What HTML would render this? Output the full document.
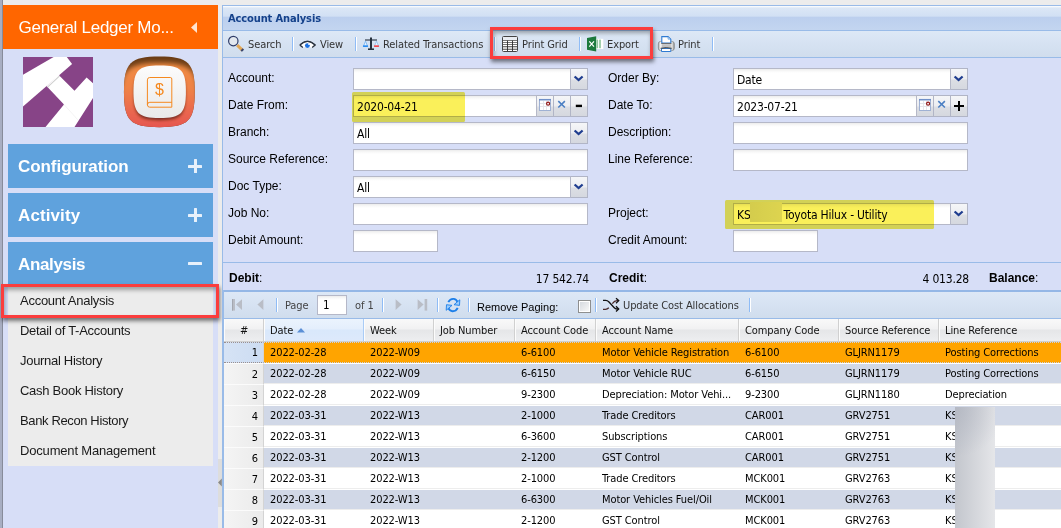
<!DOCTYPE html>
<html>
<head>
<meta charset="utf-8">
<title>Account Analysis</title>
<style>
html,body{margin:0;padding:0;}
body{width:1061px;height:528px;overflow:hidden;position:relative;background:#ececec;font-family:"Liberation Sans",sans-serif;font-size:12px;color:#000;}
.abs,.abs>*{position:absolute;}
svg{display:block;overflow:visible;}
#leftedge{left:0;top:0;width:3px;height:528px;background:linear-gradient(90deg,#a8aec2 0,#a8aec2 2px,#666973 3px);}
#side{left:3px;top:5px;width:215px;height:523px;background:#d7def7;}
#ohead{left:0;top:0;width:215px;height:44px;background:#ff6600;color:#fff;}
#ohead .t{left:15.500px;top:12px;font-size:17px;line-height:22px;white-space:nowrap;letter-spacing:-0.27px;}
.sec{left:5px;width:205px;height:44px;background:#5fa2dd;color:#fff;font-weight:bold;font-size:17px;}
.sec .t{left:10px;top:12px;line-height:22px;white-space:nowrap;}
.plus{left:180px;top:15px;width:14px;height:14px;}
.plus i{background:#e8f1fb;display:block;border-radius:.5px;}
#menu{left:5px;top:279px;width:205px;height:182px;background:#ececec;}
.mi{left:12px;font-size:13px;line-height:16px;white-space:nowrap;color:#1a1a1a;}
.redbox{border:3px solid #fb3d3d;box-shadow:1px 3px 4px rgba(0,0,0,.5),inset 1px 3px 4px rgba(0,0,0,.33);box-sizing:border-box;}
#split{left:218px;top:459px;width:4px;height:48px;background:#dddddd;}
#panel{left:222px;top:5px;width:839px;height:523px;background:#d7def7;border-left:1px solid #99bbe8;box-sizing:border-box;}
#phead{left:0;top:0;width:838px;height:26px;box-sizing:border-box;border-top:1px solid #99bbe8;border-bottom:1px solid #99bbe8;background:linear-gradient(#ffffff 0,#eef4fb 1px,#dbe7f6 2px,#d2e0f4 10px,#bccfee 11.500px,#c3d5f0 24px);}
#phead .t{left:5px;top:6px;font-weight:bold;font-size:11px;line-height:14px;color:#15428b;font-family:"DejaVu Sans Condensed","Liberation Sans",sans-serif;letter-spacing:-0.12px;white-space:nowrap;}
.bar{left:0;width:838px;box-sizing:border-box;border-bottom:1px solid #99bbe8;background:linear-gradient(#dde8f6 0,#d6e2f2 50%,#d0dded 100%);}
.tb{font-size:11px;line-height:14px;white-space:nowrap;color:#333;font-family:"DejaVu Sans Condensed","Liberation Sans",sans-serif;letter-spacing:-0.1px;}
.sep{width:1px;height:14px;background:#8fbcf6;border-right:1px solid #fff;}
.lbl{font-size:12px;line-height:14px;white-space:nowrap;color:#000;}
.inp{height:22px;box-sizing:border-box;border:1px solid #b5b8c8;background:#fff linear-gradient(#ececec 0,#f8f8f8 2px,#fff 4px);font-size:12px;line-height:22px;padding-left:3px;white-space:nowrap;overflow:hidden;font-family:"DejaVu Sans Condensed","Liberation Sans",sans-serif;letter-spacing:-0.2px;color:#000;}
.trg{width:17px;height:22px;box-sizing:border-box;border:1px solid #b1b5c6;border-left:0;background:linear-gradient(#f5f6f8 0,#ecedf1 10px,#dcdee4 11px,#d5d8df 20px);}
.trg svg{left:0;top:0;}
.hl{background:#faf05a;border-radius:1.500px;mix-blend-mode:multiply;}
#sum{left:0;top:257px;width:838px;height:30px;box-sizing:border-box;border-top:1px solid #99bbe8;border-bottom:2px solid #94b7e6;}
#sum b,#sum span{top:8px;line-height:14px;white-space:nowrap;}
#sum b i{font-style:normal;font-weight:normal;position:static}
#sum span{font-family:"DejaVu Sans Condensed","Liberation Sans",sans-serif;letter-spacing:-0.2px;top:9px}
#ghead{left:0;top:314px;width:838px;height:23px;box-sizing:border-box;border-bottom:1px solid #d0d0d0;background:linear-gradient(#f9f9f9 0,#f1f1f2 10px,#e5e6e8 11px,#edeef0 22px);}
.hc{top:0;height:22px;box-sizing:border-box;border-right:1px solid #d0d0d0;border-left:1px solid #fcfcfc;font-size:11px;line-height:24px;padding-left:5px;white-space:nowrap;overflow:hidden;font-family:"DejaVu Sans Condensed","Liberation Sans",sans-serif;letter-spacing:-0.1px;color:#111;}
.row{left:0;width:838px;height:21px;box-sizing:border-box;border-bottom:1px solid #ededed;border-top:1px solid #fff;background:#fff;}
.row.alt{background:#d1d8e7;border-bottom-color:#ededed;border-top-color:#fff}
.row.sel{background:#ffa400;border-top:1px dotted #c9d2e4;border-bottom:1px dotted #c9d2e4;}
.row span{top:0;line-height:19px;font-size:11px;white-space:nowrap;font-family:"DejaVu Sans Condensed","Liberation Sans",sans-serif;letter-spacing:-0.1px;color:#000;}
.row .n{left:1px;top:-1px;width:40px;height:21px;line-height:21px;box-sizing:border-box;text-align:right;padding-right:5px;background:linear-gradient(90deg,#f4f4f4,#ebebeb);border-right:1px solid #d4d4d4;border-top:1px solid #fbfbfb;}
.row.sel .n{background:linear-gradient(90deg,#d6e3f5,#ccdcf2);border-top:1px dotted #9a8f8f;border-bottom:1px dotted #9a8f8f;line-height:19px}
#blur{left:732px;top:402px;width:40px;height:121px;background:radial-gradient(circle 50px at 0 0,rgba(170,175,188,.6) 0,rgba(170,175,188,0) 100%),linear-gradient(90deg,#c3c6cd,#d4d6db 50%,#e5e6e9);}
</style>
</head>
<body>
<div class="abs" id="leftedge"></div>

<div class="abs" id="side">
  <div class="abs" id="ohead"><div class="abs t">General Ledger Mo...</div>
    <svg class="abs" style="left:187px;top:15.500px" width="8" height="13" viewBox="0 0 8 13"><path d="M7 1 V12 L1 6.500 Z" fill="#ffe3d0"/></svg>
  </div>

  <svg class="abs" style="left:20px;top:52px" width="70" height="70" viewBox="0 0 70 70">
    <rect width="70" height="70" fill="#874487"/>
    <path d="M0 17.700 L30.600 0 L43.800 0 L49.100 6.900 L0 49.400 Z" fill="#fff"/>
    <path d="M36.200 18.500 L51.500 33.800 L63.600 20.500 L70 26.200 L70 41 L51.500 70 L22.500 70 L41 47.500 L23.500 29 L35.500 17.800 Z" fill="#fff"/>
    <path d="M24.600 30.200 L36.600 18.900" stroke="#cfcfcf" stroke-width="1.100"/>
    <path d="M41 47.500 L55 63" stroke="#e9e9e9" stroke-width="0.500"/>
  </svg>

  <svg class="abs" style="left:119px;top:49px" width="76" height="78" viewBox="0 0 76 78">
    <defs>
      <linearGradient id="g1" x1="0" y1="0" x2="0" y2="1"><stop offset="0" stop-color="#f18c42"/><stop offset="0.350" stop-color="#ef8246"/><stop offset="0.700" stop-color="#e96350"/><stop offset="1" stop-color="#e24d4e"/></linearGradient>
      <linearGradient id="g2" x1="0" y1="0" x2="0" y2="1"><stop offset="0" stop-color="#fcfcfc"/><stop offset="1" stop-color="#e9e9e9"/></linearGradient>
      <filter id="f1" x="-30%" y="-30%" width="160%" height="160%"><feGaussianBlur stdDeviation="1.700"/></filter>
      <filter id="f2" x="-30%" y="-30%" width="160%" height="160%"><feGaussianBlur stdDeviation="2.600"/></filter>
      <clipPath id="cp"><path d="M37.350 2.450 C66.378 2.450 72.750 8.822 72.750 37.850 C72.750 66.878 66.378 73.250 37.350 73.250 C8.322 73.250 1.950 66.878 1.950 37.850 C1.950 8.822 8.322 2.450 37.350 2.450 Z"/></clipPath>
    </defs>
    <g clip-path="url(#cp)">
      <rect x="0" y="0" width="76" height="78" fill="#6b3d16"/>
      <path d="M37.350 9.000 C69.330 9.000 76.350 15.660 76.350 46.000 C76.350 76.340 69.330 83.000 37.350 83.000 C5.370 83.000 -1.650 76.340 -1.650 46.000 C-1.650 15.660 5.370 9.000 37.350 9.000 Z" fill="url(#g1)" filter="url(#f2)"/>
    </g>
    <path d="M37.700 15.000 C58.692 15.000 63.300 19.608 63.300 40.600 C63.300 61.592 58.692 66.200 37.700 66.200 C16.708 66.200 12.100 61.592 12.100 40.600 C12.100 19.608 16.708 15.000 37.700 15.000 Z" fill="#4a1208" opacity="0.700" filter="url(#f1)"/>
    <path d="M37.700 11.600 C59.184 11.600 63.900 16.316 63.900 37.800 C63.900 59.284 59.184 64.000 37.700 64.000 C16.216 64.000 11.500 59.284 11.500 37.800 C11.500 16.316 16.216 11.600 37.700 11.600 Z" fill="url(#g2)"/>
    <g fill="none" stroke="#f5891f" stroke-width="1">
      <path d="M27.800 23.500 H48.300 Q49.800 23.500 49.800 25 V53.200 H27.800 Q25.400 53.200 25.400 50.800 V25.900 Q25.400 23.500 27.800 23.500 Z"/>
      <path d="M49.800 48.300 H27.800 Q25.400 48.300 25.400 50.800"/>
    </g>
    <text x="37.400" y="41.400" font-family="Liberation Sans, sans-serif" font-size="16" fill="#f5891f" text-anchor="middle">$</text>
  </svg>

  <div class="abs sec" style="top:139px"><div class="abs t" style="letter-spacing:-0.06px">Configuration</div><div class="abs plus"><i style="left:5.500px;top:0;width:3px;height:14px"></i><i style="left:0;top:5.5px;width:14px;height:3px"></i></div></div>
  <div class="abs sec" style="top:188px"><div class="abs t" style="letter-spacing:0.1px">Activity</div><div class="abs plus"><i style="left:5.500px;top:0;width:3px;height:14px"></i><i style="left:0;top:5.5px;width:14px;height:3px"></i></div></div>
  <div class="abs sec" style="top:237px"><div class="abs t" style="letter-spacing:-0.35px">Analysis</div><div class="abs plus"><i style="left:0;top:5px;width:14px;height:3px"></i></div></div>

  <div class="abs" id="menu"><div class="abs mi" style="top:9px;letter-spacing:-0.26px">Account Analysis</div><div class="abs mi" style="top:39px;letter-spacing:-0.29px">Detail of T-Accounts</div><div class="abs mi" style="top:69px;letter-spacing:-0.3px">Journal History</div><div class="abs mi" style="top:99px;letter-spacing:-0.27px">Cash Book History</div><div class="abs mi" style="top:129px;letter-spacing:-0.37px">Bank Recon History</div><div class="abs mi" style="top:159px;letter-spacing:-0.18px">Document Management</div></div>
</div>
<div class="abs redbox" style="left:1px;top:284px;width:218px;height:34px"></div>
<div class="abs" id="split"><svg style="left:0;top:19px" width="4" height="9"><path d="M3.800 0.500 V8.500 L0 4.500 Z" fill="#8a8a8a"/></svg></div>

<div class="abs" id="panel">
  <div class="abs" id="phead"><div class="abs t">Account Analysis</div></div>
  <div class="abs bar" id="tbar" style="top:26px;height:27px">
    <div class="abs" style="left:4px;top:4px"><svg width="18" height="18" viewBox="0 0 18 18"><path d="M10.200 10.200 L15.600 15.400" stroke="#e3a755" stroke-width="3" stroke-linecap="butt"/><path d="M14.600 14.400 L16 15.800" stroke="#39466f" stroke-width="3"/><circle cx="6.300" cy="6.100" r="4.700" fill="#e3e8ef" stroke="#2f3c68" stroke-width="1.200"/></svg></div>
    <div class="abs tb" style="left:25px;top:7px">Search</div>
    <div class="abs sep" style="left:69px;top:6px"></div>
    <div class="abs" style="left:75.800px;top:8.600px"><svg width="17" height="9.500" viewBox="0 0 18 10"><path d="M1 5.300 Q9 -2.600 17 5.300 L14 7.800 M1 5.300 L4 7.800" fill="#fff" stroke="#2b3440" stroke-width="1.300" stroke-linejoin="round"/><path d="M1.500 5.300 Q9 -2.200 16.500 5.300 L14 7.600 L4 7.600 Z" fill="#fff"/><path d="M1 5.300 Q9 -2.600 17 5.300 L14 7.800 M1 5.300 L4 7.800" fill="none" stroke="#2b3440" stroke-width="1.300"/><circle cx="8.900" cy="5.900" r="2.600" fill="#1b70e0"/><circle cx="10.600" cy="4.300" r="1" fill="#fff"/></svg></div>
    <div class="abs tb" style="left:97px;top:7px">View</div>
    <div class="abs sep" style="left:132px;top:6px"></div>
    <div class="abs" style="left:139px;top:6px"><svg width="18" height="14" viewBox="0 0 18 14"><path d="M9 0.500 V12" stroke="#26313f" stroke-width="2"/><path d="M3 3 H15" stroke="#26313f" stroke-width="1.100"/><path d="M6 12.200 H12" stroke="#26313f" stroke-width="1.600"/><path d="M3.500 4.200 L1.300 9.500 H5.700 Z" fill="#eaf3fd" stroke="#6fb0f2" stroke-width="0.800"/><path d="M14.500 4.200 L12.300 9.500 H16.700 Z" fill="#eaf3fd" stroke="#8fbdf0" stroke-width="0.800"/><rect x="1.100" y="8.300" width="4.800" height="1.700" fill="#2a8cf2"/><rect x="12.100" y="8.300" width="4.800" height="1.700" fill="#f0484f"/></svg></div>
    <div class="abs tb" style="left:160px;top:7px">Related Transactions</div>
    <div class="abs sep" style="left:271px;top:6px"></div>
    <div class="abs" style="left:279px;top:5px"><svg width="16" height="16" viewBox="0 0 16 16"><rect x="0.500" y="0.500" width="15" height="15" rx="1" fill="#fff" stroke="#444"/><rect x="1" y="1" width="14" height="3" fill="#e9edf3"/><rect x="1" y="10.500" width="14" height="2.500" fill="#cfcfcf"/><path d="M1 4.500 H15 M1 6.500 H15 M1 8.500 H15 M1 10.500 H15 M1 13.500 H15" stroke="#4a4a4a" stroke-width="0.750"/><path d="M5.500 4.500 V15 M10.500 4.500 V15" stroke="#2a2a2a" stroke-width="0.900"/></svg></div>
    <div class="abs tb" style="left:299px;top:7px">Print Grid</div>
    <div class="abs sep" style="left:356px;top:6px"></div>
    <div class="abs" style="left:364px;top:5px"><svg width="17" height="16" viewBox="0 0 17 16"><rect x="9" y="2.800" width="7.300" height="10.200" fill="#fff"/><rect x="9.600" y="3.600" width="1.500" height="8.600" fill="#8cc59b"/><rect x="12.200" y="3.600" width="1.600" height="8.600" fill="#8cc59b"/><path d="M0 1.900 L9.200 0.200 V15.600 L0 13.800 Z" fill="#1d7a3d"/><path d="M2.300 5.300 L7 10.600 M7 5.300 L2.300 10.600" stroke="#fff" stroke-width="1.200"/></svg></div>
    <div class="abs tb" style="left:384px;top:7px">Export</div>
    <div class="abs" style="left:435px;top:5px"><svg width="17" height="16" viewBox="0 0 17 16"><defs><linearGradient id="pg" x1="0" y1="0" x2="1" y2="0"><stop offset="0" stop-color="#9a9a9a"/><stop offset="0.120" stop-color="#f4f4f4"/><stop offset="0.300" stop-color="#e4e4e4"/><stop offset="0.800" stop-color="#e0e0e0"/><stop offset="0.920" stop-color="#cfcfcf"/><stop offset="1" stop-color="#6a6a6a"/></linearGradient></defs><rect x="0.300" y="5.300" width="16" height="9.400" rx="2.600" fill="url(#pg)" stroke="#7a7a7a" stroke-width="0.600"/><path d="M3.800 7 V0.600 H10 L12.800 3.200 V7 Z" fill="#fff" stroke="#2f7bd2" stroke-width="1.100"/><path d="M10 0.600 L12.800 3.200 H10 Z" fill="#cfe2f7" stroke="#2f7bd2" stroke-width="0.500"/><rect x="3.300" y="7" width="10" height="0.900" fill="#666"/><rect x="3.800" y="8.200" width="9" height="3.300" fill="#c2c2c2"/><path d="M3.500 12.500 H12.800 V15.500 H3.500 Z" fill="#fff" stroke="#2f7bd2" stroke-width="1"/><path d="M2.600 12.300 Q8.200 10.900 13.700 12.300" stroke="#444" stroke-width="1" fill="none"/></svg></div>
    <div class="abs tb" style="left:455px;top:7px">Print</div>
    <div class="abs sep" style="left:489px;top:6px"></div>
  </div>

  <div id="form">
    <div class="abs lbl" style="left:5px;top:66px">Account:</div>
    <div class="abs lbl" style="left:5px;top:93px">Date From:</div>
    <div class="abs lbl" style="left:5px;top:120px">Branch:</div>
    <div class="abs lbl" style="left:5px;top:147px">Source Reference:</div>
    <div class="abs lbl" style="left:5px;top:174px">Doc Type:</div>
    <div class="abs lbl" style="left:5px;top:201px">Job No:</div>
    <div class="abs lbl" style="left:5px;top:228px">Debit Amount:</div>
    <div class="abs lbl" style="left:385px;top:66px">Order By:</div>
    <div class="abs lbl" style="left:385px;top:93px">Date To:</div>
    <div class="abs lbl" style="left:385px;top:120px">Description:</div>
    <div class="abs lbl" style="left:385px;top:147px">Line Reference:</div>
    <div class="abs lbl" style="left:385px;top:201px">Project:</div>
    <div class="abs lbl" style="left:385px;top:228px">Credit Amount:</div>
    <div class="abs inp" style="left:130px;top:63px;width:218px"></div><div class="abs trg" style="left:348px;top:63px"><svg width="16" height="20"><path d="M3.600 7.500 L7.600 11 L11.600 7.500" fill="none" stroke="#1f3d8f" stroke-width="2.300"/></svg></div>
    <div class="abs inp" style="left:130px;top:90px;width:184px">2020-04-21</div><div class="abs trg" style="left:314px;top:90px"><svg width="16" height="20"><rect x="2.500" y="3.500" width="11" height="11" fill="#fff" stroke="#9fb1d3"/><path d="M2 3.700 H14" stroke="#6f8fc8" stroke-width="1.500"/><path d="M6.500 5 V14 M9.500 5 V14 M3 7.500 H13 M3 10.500 H13" stroke="#e6e6ea" stroke-width="1"/><circle cx="11.100" cy="7.700" r="1.500" fill="#fff" stroke="#8e1212" stroke-width="1.200"/></svg></div><div class="abs trg" style="left:331px;top:90px"><svg width="16" height="20"><path d="M4.300 5.200 L10.900 11.500 M10.900 5.200 L4.300 11.500" stroke="#4b7fc3" stroke-width="1.600" fill="none"/></svg></div><div class="abs trg" style="left:348px;top:90px"><svg width="16" height="20"><path d="M4.800 9.900 H11" stroke="#000" stroke-width="2.400"/></svg></div>
    <div class="abs inp" style="left:130px;top:117px;width:218px">All</div><div class="abs trg" style="left:348px;top:117px"><svg width="16" height="20"><path d="M3.600 7.500 L7.600 11 L11.600 7.500" fill="none" stroke="#1f3d8f" stroke-width="2.300"/></svg></div>
    <div class="abs inp" style="left:130px;top:144px;width:235px"></div>
    <div class="abs inp" style="left:130px;top:171px;width:218px">All</div><div class="abs trg" style="left:348px;top:171px"><svg width="16" height="20"><path d="M3.600 7.500 L7.600 11 L11.600 7.500" fill="none" stroke="#1f3d8f" stroke-width="2.300"/></svg></div>
    <div class="abs inp" style="left:130px;top:198px;width:235px"></div>
    <div class="abs inp" style="left:130px;top:225px;width:85px"></div>
    <div class="abs inp" style="left:510px;top:63px;width:218px">Date</div><div class="abs trg" style="left:728px;top:63px"><svg width="16" height="20"><path d="M3.600 7.500 L7.600 11 L11.600 7.500" fill="none" stroke="#1f3d8f" stroke-width="2.300"/></svg></div>
    <div class="abs inp" style="left:510px;top:90px;width:184px">2023-07-21</div><div class="abs trg" style="left:694px;top:90px"><svg width="16" height="20"><rect x="2.500" y="3.500" width="11" height="11" fill="#fff" stroke="#9fb1d3"/><path d="M2 3.700 H14" stroke="#6f8fc8" stroke-width="1.500"/><path d="M6.500 5 V14 M9.500 5 V14 M3 7.500 H13 M3 10.500 H13" stroke="#e6e6ea" stroke-width="1"/><circle cx="11.100" cy="7.700" r="1.500" fill="#fff" stroke="#8e1212" stroke-width="1.200"/></svg></div><div class="abs trg" style="left:711px;top:90px"><svg width="16" height="20"><path d="M4.300 5.200 L10.900 11.500 M10.900 5.200 L4.300 11.500" stroke="#4b7fc3" stroke-width="1.600" fill="none"/></svg></div><div class="abs trg" style="left:728px;top:90px"><svg width="16" height="20"><path d="M3 10 H13 M8 5 V15" stroke="#000" stroke-width="2"/></svg></div>
    <div class="abs inp" style="left:510px;top:117px;width:235px"></div>
    <div class="abs inp" style="left:510px;top:144px;width:235px"></div>
    <div class="abs inp" style="left:510px;top:198px;width:218px">KS<span style="display:inline-block;position:static;width:33px"></span>Toyota Hilux - Utility</div><div class="abs trg" style="left:728px;top:198px"><svg width="16" height="20"><path d="M3.600 7.500 L7.600 11 L11.600 7.500" fill="none" stroke="#1f3d8f" stroke-width="2.300"/></svg></div>
    <div class="abs" style="left:527px;top:197px;width:32px;height:20px;background:linear-gradient(90deg,#d9d9d9,#e2e2e0)"></div>
    <div class="abs inp" style="left:510px;top:225px;width:85px"></div>
    <div class="abs hl" style="left:129px;top:87px;width:113px;height:30px"></div>
    <div class="abs hl" style="left:502px;top:195px;width:209px;height:29px"></div>
  </div>

  <div class="abs" id="sum">
    <b style="left:6px">Debit<i>:</i></b>
    <span style="right:472px">17 542.74</span>
    <b style="left:386px">Credit<i>:</i></b>
    <span style="right:92px">4 013.28</span>
    <b style="left:766px">Balance<i>:</i></b>
  </div>

  <div class="abs bar" id="pbar" style="top:287px;height:27px">
    <div class="abs" style="left:9px;top:7px"><svg width="12" height="12" viewBox="0 0 12 12"><rect x="0" y="0" width="3" height="11.600" fill="#b9bdc6" stroke="none"/><rect x="0" y="0" width="1" height="11.600" fill="#a3a7b0"/><path d="M4 5.600 L10 0.300 V10.900 Z" fill="#b9bdc6"/></svg></div>
    <div class="abs" style="left:33.500px;top:7px"><svg width="12" height="12" viewBox="0 0 12 12"><path d="M0.4 5.600 L6.4 0.300 V10.900 Z" fill="#b9bdc6"/></svg></div>
    <div class="abs sep" style="left:53px;top:6px"></div>
    <div class="abs tb" style="left:62px;top:7px;color:#444">Page</div>
    <div class="abs inp" style="left:94px;top:3px;width:30px;height:20px;line-height:19px;font-size:11.500px;padding-left:5px">1</div>
    <div class="abs tb" style="left:132px;top:7px;color:#444">of 1</div>
    <div class="abs sep" style="left:159px;top:6px"></div>
    <div class="abs" style="left:172px;top:7px"><svg width="12" height="12" viewBox="0 0 12 12"><path d="M6.6 5.600 L0.600 0.300 V10.900 Z" fill="#b9bdc6"/></svg></div>
    <div class="abs" style="left:194px;top:7px"><svg width="12" height="12" viewBox="0 0 12 12"><rect x="7.600" y="0" width="2.600" height="11.600" fill="#b9bdc6"/><path d="M6.6 5.600 L0.600 0.300 V10.900 Z" fill="#b9bdc6"/></svg></div>
    <div class="abs sep" style="left:214px;top:6px"></div>
    <div class="abs" style="left:223px;top:6px"><svg width="14" height="14" viewBox="0 0 14 14"><path d="M2.300 4.200 Q4 0.700 7.500 0.900 Q10.300 1.100 11.600 4" fill="none" stroke="#1d7fe9" stroke-width="1.900"/><path d="M13.800 1.800 L13.500 7.400 L8 6.700 Z" fill="#9ccdfc" stroke="#1d7fe9" stroke-width="0.900" stroke-linejoin="round"/><path d="M11.700 9.900 Q10 13.400 6.500 13.200 Q3.700 13 2.400 10.100" fill="none" stroke="#1d7fe9" stroke-width="1.900"/><path d="M0.200 12.300 L0.500 6.700 L6 7.400 Z" fill="#9ccdfc" stroke="#1d7fe9" stroke-width="0.900" stroke-linejoin="round"/></svg></div>
    <div class="abs sep" style="left:245px;top:6px"></div>
    <div class="abs lbl" style="left:254px;top:7.500px;font-size:11px">Remove Paging:</div>
    <div class="abs" style="left:355px;top:8px"><svg width="13" height="13" viewBox="0 0 13 13"><defs><linearGradient id="cg" x1="0" y1="0" x2="1" y2="1"><stop offset="0" stop-color="#d6dae0"/><stop offset="1" stop-color="#f7f7f7"/></linearGradient></defs><rect x="0.500" y="0.500" width="12" height="12" fill="#fff" stroke="#8e8f8f"/><rect x="2" y="2" width="9" height="9" fill="url(#cg)"/></svg></div>
    <div class="abs sep" style="left:372px;top:6px"></div>
    <div class="abs" style="left:380px;top:6px"><svg width="16" height="14" viewBox="0 0 16 14"><g fill="none" stroke="#111" stroke-width="1.300"><path d="M0 2.400 H2.500 Q4.500 2.400 6 4 L11 9.500 Q12.300 11 14 11 H15.500"/><path d="M13 8.300 L15.700 11 L13 13.500"/><path d="M0 11.300 H2.500 Q4.300 11.300 5.800 9.800" stroke="#4a2a2a"/><path d="M9.300 5.600 Q11.500 2.600 14 2.600 H15.500" stroke="#4a2a2a"/><path d="M13 0.200 L15.700 2.600 L13 5.200"/></g></svg></div>
    <div class="abs tb" style="left:400px;top:7px">Update Cost Allocations</div>
    <div class="abs sep" style="left:526px;top:6px"></div>
  </div>

  <div class="abs" id="ghead">
    <div class="abs hc" style="left:1px;width:40px;text-align:center;padding:0">#</div>
    <div class="abs hc" style="left:41px;width:100px;background:linear-gradient(#ebf3fd 0,#e4eefc 10px,#d9e8fb 11px,#dde9fb 22px);border-right-color:#aaccf6">Date<svg style="left:31.500px;top:9px" width="8" height="5"><path d="M0 4.500 L4 0 L8 4.500 Z" fill="#5b8fd6"/></svg></div>
    <div class="abs hc" style="left:141px;width:70px">Week</div>
    <div class="abs hc" style="left:211px;width:81px">Job Number</div>
    <div class="abs hc" style="left:292px;width:81px">Account Code</div>
    <div class="abs hc" style="left:373px;width:143px">Account Name</div>
    <div class="abs hc" style="left:516px;width:100px">Company Code</div>
    <div class="abs hc" style="left:616px;width:100px">Source Reference</div>
    <div class="abs hc" style="left:716px;width:130px">Line Reference</div>
  </div>

  <div id="rows">
<div class="abs row sel" style="top:337px"><span class="n">1</span><span style="left:47px">2022-02-28</span><span style="left:147px">2022-W09</span><span style="left:298px">6-6100</span><span style="left:379px">Motor Vehicle Registration</span><span style="left:522px">6-6100</span><span style="left:622px">GLJRN1179</span><span style="left:722px">Posting Corrections</span></div>
<div class="abs row alt" style="top:358px"><span class="n">2</span><span style="left:47px">2022-02-28</span><span style="left:147px">2022-W09</span><span style="left:298px">6-6150</span><span style="left:379px">Motor Vehicle RUC</span><span style="left:522px">6-6150</span><span style="left:622px">GLJRN1179</span><span style="left:722px">Posting Corrections</span></div>
<div class="abs row" style="top:379px"><span class="n">3</span><span style="left:47px">2022-02-28</span><span style="left:147px">2022-W09</span><span style="left:298px">9-2300</span><span style="left:379px">Depreciation: Motor Vehi...</span><span style="left:522px">9-2300</span><span style="left:622px">GLJRN1180</span><span style="left:722px">Depreciation</span></div>
<div class="abs row alt" style="top:400px"><span class="n">4</span><span style="left:47px">2022-03-31</span><span style="left:147px">2022-W13</span><span style="left:298px">2-1000</span><span style="left:379px">Trade Creditors</span><span style="left:522px">CAR001</span><span style="left:622px">GRV2751</span><span style="left:722px">KS</span></div>
<div class="abs row" style="top:421px"><span class="n">5</span><span style="left:47px">2022-03-31</span><span style="left:147px">2022-W13</span><span style="left:298px">6-3600</span><span style="left:379px">Subscriptions</span><span style="left:522px">CAR001</span><span style="left:622px">GRV2751</span><span style="left:722px">KS</span></div>
<div class="abs row alt" style="top:442px"><span class="n">6</span><span style="left:47px">2022-03-31</span><span style="left:147px">2022-W13</span><span style="left:298px">2-1200</span><span style="left:379px">GST Control</span><span style="left:522px">CAR001</span><span style="left:622px">GRV2751</span><span style="left:722px">KS</span></div>
<div class="abs row" style="top:463px"><span class="n">7</span><span style="left:47px">2022-03-31</span><span style="left:147px">2022-W13</span><span style="left:298px">2-1000</span><span style="left:379px">Trade Creditors</span><span style="left:522px">MCK001</span><span style="left:622px">GRV2763</span><span style="left:722px">KS</span></div>
<div class="abs row alt" style="top:484px"><span class="n">8</span><span style="left:47px">2022-03-31</span><span style="left:147px">2022-W13</span><span style="left:298px">6-6300</span><span style="left:379px">Motor Vehicles Fuel/Oil</span><span style="left:522px">MCK001</span><span style="left:622px">GRV2763</span><span style="left:722px">KS</span></div>
<div class="abs row" style="top:505px"><span class="n">9</span><span style="left:47px">2022-03-31</span><span style="left:147px">2022-W13</span><span style="left:298px">2-1200</span><span style="left:379px">GST Control</span><span style="left:522px">MCK001</span><span style="left:622px">GRV2763</span><span style="left:722px">KS</span></div>
  </div>
  <div class="abs" style="left:0;top:285px;width:1px;height:240px;background:#99bbe8"></div>
  <div class="abs" id="blur"></div>
</div>

<div class="abs redbox" style="left:490px;top:27px;width:163px;height:32px"></div>
</body>
</html>
